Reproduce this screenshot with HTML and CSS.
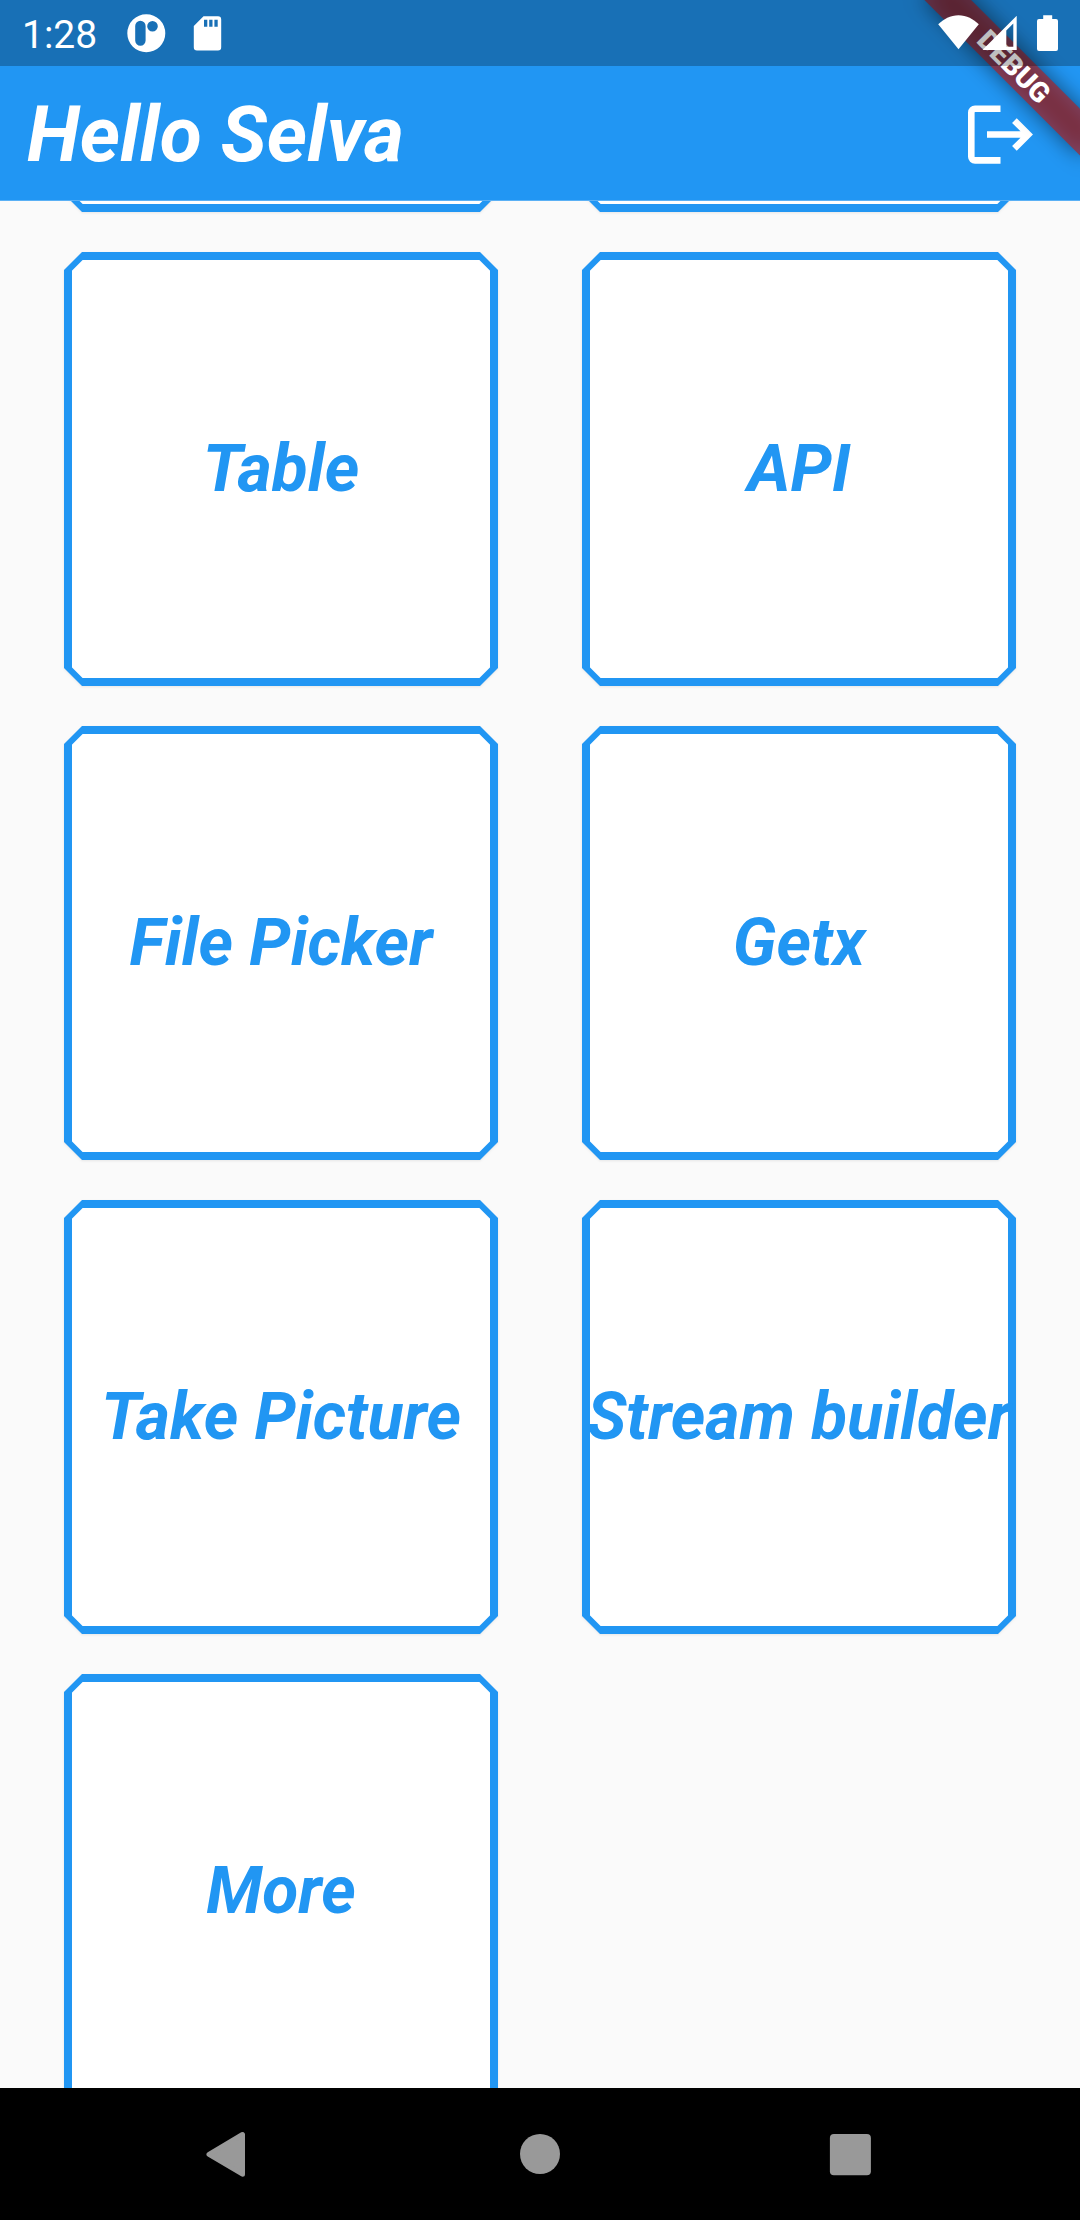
FILE: index.html
```html
<!DOCTYPE html>
<html lang="en">
<head>
<meta charset="utf-8">
<title>Hello Selva</title>
<link rel="stylesheet" href="styles.css">
</head>
<body>
<div class="screen">
  <header class="header">
    <div class="status-bar">
      <span class="clock">1:28</span>
      <svg class="notif" width="40" height="66" viewBox="126 0 40 66"><path fill-rule="evenodd" d="M127.3 33.3a19 19 0 1 0 38 0a19 19 0 1 0-38 0zM135.2 26a5.2 5.2 0 0 1 10.4 0v14.500a5.200 5.200 0 0 1-10.400 0zM147.200 26.300a5.300 5.300 0 1 0 10.600 0a5.300 5.300 0 1 0-10.600 0z"/></svg>
      <svg class="sd" width="30" height="66" viewBox="192 0 30 66"><path fill-rule="evenodd" d="M203.500 16.300H218a3.200 3.200 0 0 1 3.200 3.200V47.300a3.200 3.200 0 0 1-3.200 3.200H197a3.200 3.200 0 0 1-3.200-3.200V26zM204 19.700v7h3.300v-7zM209.200 19.700v7h3.300v-7zM214.400 19.700v7h3.300v-7z"/></svg>
      <svg class="signals" width="130" height="66" viewBox="934 0 130 66">
        <path d="M958.500 49.300L938.200 24.300C943.500 19 950.500 15.200 958.500 15.200S973.500 19 978.800 24.300z"/>
        <path fill-rule="evenodd" d="M982.500 50L1016.700 15.800V50zM1006.300 30.500V46.700H1013.300V23.500z"/>
        <path d="M1043.200 15.300h9v3.700h3.800a2 2 0 0 1 2 2v28a2 2 0 0 1-2 2h-17a2 2 0 0 1-2-2V21a2 2 0 0 1 2-2h4.200z"/>
      </svg>
    </div>
    <div class="toolbar">
      <h1 class="title">Hello Selva</h1>
      <svg class="logout" width="66" height="66" viewBox="967 101 66 66"><path d="M1000.500 108.700H975a3.700 3.700 0 0 0-3.700 3.700V156.700a3.700 3.700 0 0 0 3.700 3.700H1000.500M987 134.500H1027M1014.400 120.600L1028.300 134.500L1014.400 148.400"/></svg>
    </div>
    <svg class="banner" width="200" height="201" viewBox="880 0 200 201">
      <defs><filter id="soft" x="-50%" y="-150%" width="200%" height="400%"><feGaussianBlur stdDeviation="10.900"/></filter></defs>
      <g transform="translate(1013.900 66.100) rotate(45)">
        <rect class="banner-shadow" x="-110" y="-16.500" width="220" height="33" filter="url(#soft)"/>
        <rect class="banner-strip" x="-110" y="-16.500" width="220" height="33"/>
        <text class="banner-text" x="0.500" y="10" text-anchor="middle">DEBUG</text>
      </g>
    </svg>
  </header>
  <main class="content">
    <div class="grid">
      <div class="card"></div>
      <div class="card"></div>
      <div class="card"><span class="label">Table</span></div>
      <div class="card"><span class="label">API</span></div>
      <div class="card"><span class="label">File Picker</span></div>
      <div class="card"><span class="label">Getx</span></div>
      <div class="card"><span class="label">Take Picture</span></div>
      <div class="card"><span class="label">Stream builder</span></div>
      <div class="card"><span class="label">More</span></div>
    </div>
  </main>
  <nav class="nav-bar">
    <svg width="42" height="48" viewBox="205 2130 42 48"><path class="back" d="M209 2154.300L242.500 2134.500V2174.200z"/></svg>
    <svg width="42" height="48" viewBox="519 2130 42 48"><circle cx="540" cy="2154" r="20"/></svg>
    <svg width="42" height="48" viewBox="829 2130 42 48"><rect x="829.900" y="2134" width="41" height="41.300" rx="4"/></svg>
  </nav>
</div>
</body>
</html>
```
FILE: styles.css
```css
* { box-sizing: border-box; }
body {
  margin: 0;
  font-family: Roboto, "Liberation Sans", sans-serif;
}
.screen {
  width: 1080px;
  height: 2220px;
  display: flex;
  flex-direction: column;
  overflow: hidden;
  background: #fafafa;
}
.header {
  position: relative;
  flex: none;
  height: 201px;
  background: #2196f3;
  border-bottom: 1px solid #5ab0f5;
}
.status-bar {
  position: relative;
  z-index: 2;
  display: flex;
  align-items: center;
  height: 66px;
  padding: 0 16px 0 22px;
  background: rgba(0, 0, 0, 0.25);
}
.status-bar svg { flex: none; fill: #fff; }
.clock {
  width: 104px;
  color: #fff;
  font-size: 39px;
  line-height: 46px;
  padding-top: 4px;
}
.sd { margin-left: 26px; }
.status-bar .signals { margin-left: auto; }
.toolbar {
  display: flex;
  align-items: center;
  justify-content: space-between;
  height: 134px;
  padding: 2px 47px 0 27px;
}
.title {
  margin: 0;
  padding-top: 2px;
  color: #fff;
  font-size: 77px;
  font-weight: 700;
  font-style: italic;
  line-height: 90px;
  white-space: nowrap;
}
.logout { fill: none; stroke: #fff; stroke-width: 6.6; }
.banner { position: absolute; top: 0; right: 0; z-index: 1; }
.banner-shadow { fill: rgba(0, 0, 0, 0.5); }
.banner-strip { fill: rgba(183, 28, 28, 0.627); }
.banner-text { fill: #fff; font-size: 28px; font-weight: 900; }
.content { flex: 1; min-height: 0; overflow: hidden; }
.grid {
  display: grid;
  grid-template-columns: 434px 434px;
  grid-auto-rows: 434px;
  gap: 40px 84px;
  margin-top: -423px;
  padding: 0 64px;
}
.card {
  position: relative;
  isolation: isolate;
  display: flex;
  align-items: center;
  justify-content: center;
  filter: drop-shadow(0 1px 1px rgba(0, 0, 0, 0.08));
}
.card::before,
.card::after {
  content: "";
  position: absolute;
  z-index: -1;
  clip-path: polygon(var(--cut) 0, calc(100% - var(--cut)) 0, 100% var(--cut), 100% calc(100% - var(--cut)), calc(100% - var(--cut)) 100%, var(--cut) 100%, 0 calc(100% - var(--cut)), 0 var(--cut));
}
.card::before { --cut: 18px; inset: 0; background: #2196f3; }
.card::after { --cut: 11.5px; inset: 7.6px; background: #fff; }
.label {
  color: #2196f3;
  font-size: 66px;
  font-weight: 700;
  font-style: italic;
  line-height: 78px;
  white-space: nowrap;
}
.nav-bar {
  flex: none;
  display: flex;
  align-items: center;
  justify-content: space-between;
  height: 132px;
  padding: 0 209px 0 205px;
  background: #000;
}
.nav-bar svg { fill: #999; }
.nav-bar svg:nth-child(2) { margin-left: 4px; }
.back { stroke: #999; stroke-width: 5; stroke-linejoin: round; }
```
